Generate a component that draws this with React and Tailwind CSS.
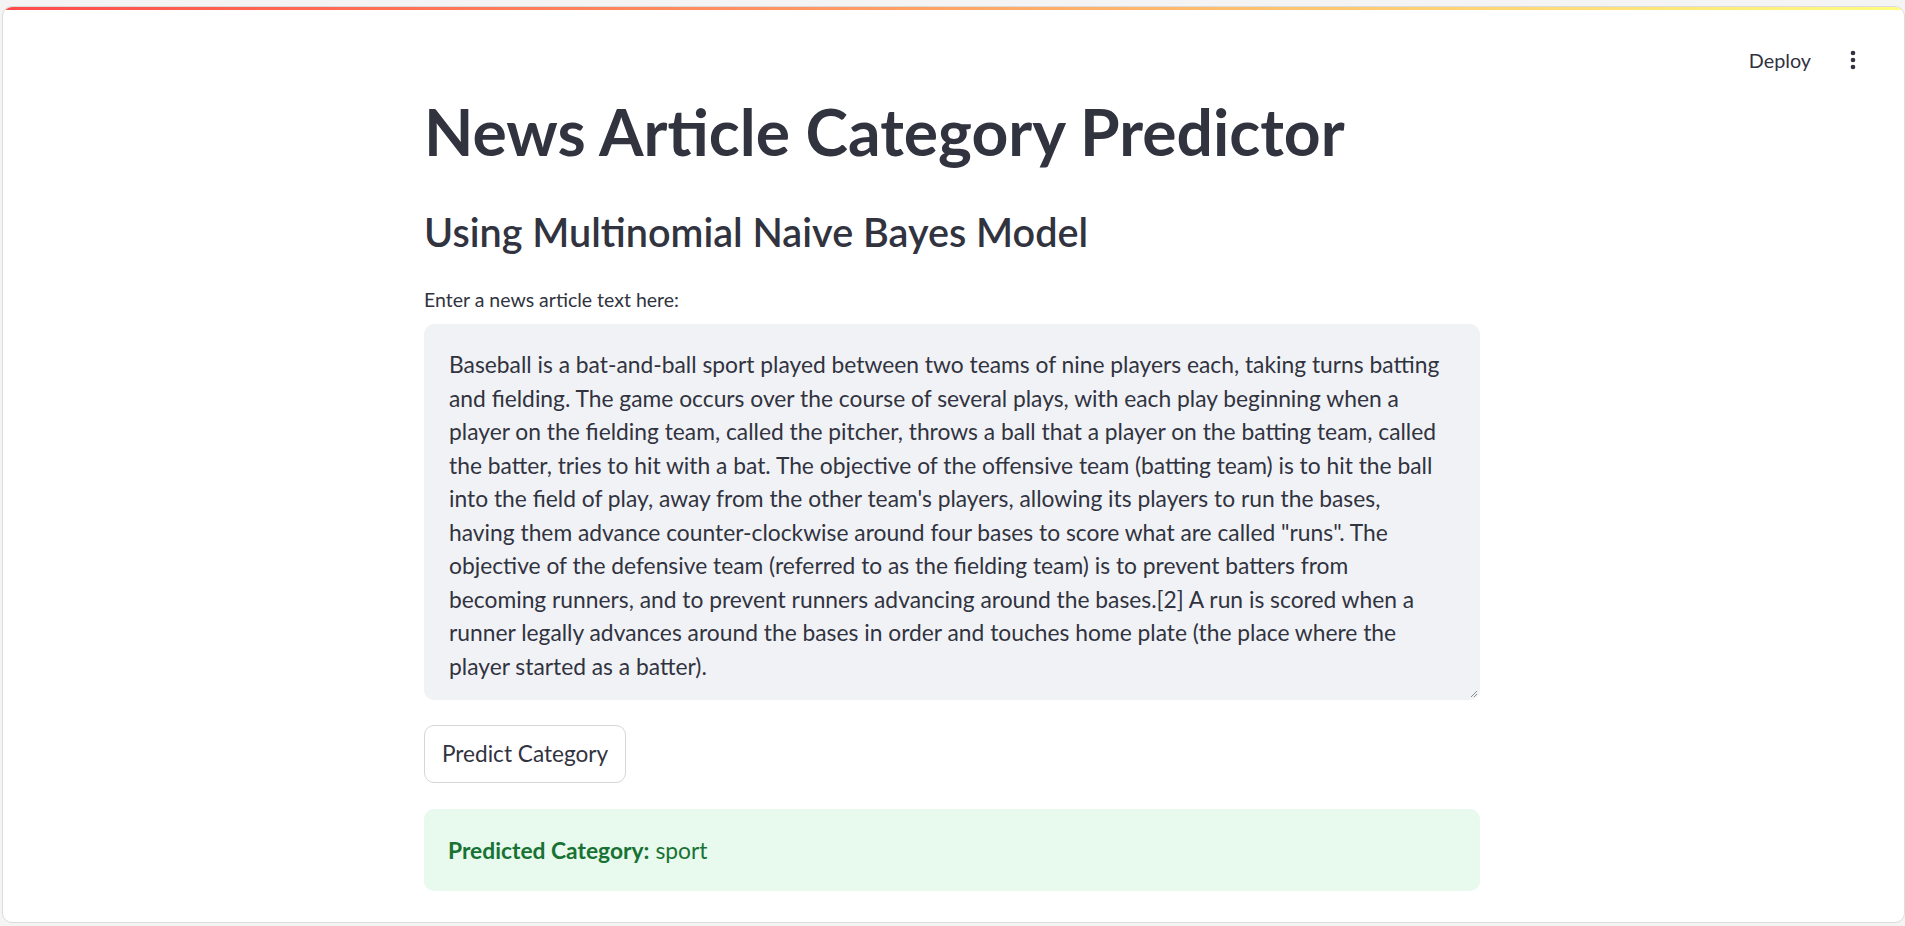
import { useState } from "react";

const ARTICLE_LINES = [
  "Baseball is a bat-and-ball sport played between two teams of nine players each, taking turns batting",
  "and fielding. The game occurs over the course of several plays, with each play beginning when a",
  "player on the fielding team, called the pitcher, throws a ball that a player on the batting team, called",
  "the batter, tries to hit with a bat. The objective of the offensive team (batting team) is to hit the ball",
  "into the field of play, away from the other team's players, allowing its players to run the bases,",
  "having them advance counter-clockwise around four bases to score what are called \"runs\". The",
  "objective of the defensive team (referred to as the fielding team) is to prevent batters from",
  "becoming runners, and to prevent runners advancing around the bases.[2] A run is scored when a",
  "runner legally advances around the bases in order and touches home plate (the place where the",
  "player started as a batter).",
];

function MenuDots() {
  return (
    <svg width="8" height="20" viewBox="0 0 8 20" className="text-[#31333f]">
      <circle cx="4" cy="3" r="2.3" fill="currentColor" />
      <circle cx="4" cy="10" r="2.3" fill="currentColor" />
      <circle cx="4" cy="17" r="2.3" fill="currentColor" />
    </svg>
  );
}

function ResizeGrip() {
  return (
    <svg width="9" height="9" viewBox="0 0 9 9" className="absolute bottom-[2px] right-[2px]">
      <path d="M8 2 L2 8 M8 5 L5 8" stroke="#8a8a8a" strokeWidth="1" />
    </svg>
  );
}

export default function App() {
  const [category] = useState("sport");

  return (
    <div className="h-[926px] w-full overflow-hidden bg-[#f4f4f4] pl-[2px] pt-[6px] font-['Lato',sans-serif] text-[#31333f]">
      <div className="flex h-[917px] flex-col overflow-hidden rounded-[10px] border border-[#dcdcdc] bg-white">
        <div className="h-[3px] shrink-0 bg-[linear-gradient(90deg,#ff4b4b,#fffd80)]" />

        <header className="flex h-[89px] shrink-0 items-start justify-end gap-[38px] pr-[47px] pt-[36px]">
          <button className="text-[19.8px] leading-[28px] text-[#31333f]">Deploy</button>
          <div className="flex h-[28px] items-center">
            <MenuDots />
          </div>
        </header>

        <main className="ml-[421px] flex w-[1056px] flex-col">
          <h1 className="text-[64.2px] font-bold leading-[66px]">News Article Category Predictor</h1>

          <h2 className="mt-[40px] text-[39.6px] font-semibold leading-[54px]">Using Multinomial Naive Bayes Model</h2>

          <label className="mt-[27px] text-[19.5px] leading-[28px]">Enter a news article text here:</label>

          <div className="relative mt-[10px] h-[376px] rounded-[10px] bg-[#f0f2f6] px-[25px] pt-[24px] text-[22.8px] leading-[33.5px]">
            {ARTICLE_LINES.map((line, i) => (
              <div key={i} className="whitespace-nowrap">
                {line}
              </div>
            ))}
            <ResizeGrip />
          </div>

          <div className="mt-[25px]">
            <button className="h-[58px] rounded-[10px] border border-[#d5d6d9] bg-white px-[17px] text-[22.6px] text-[#31333f]">
              Predict Category
            </button>
          </div>

          <div className="mt-[26px] flex h-[82px] items-center rounded-[10px] bg-[#e8f9ee] px-[24px] text-[22.8px] text-[#177233]">
            <span className="font-bold">Predicted Category:</span>
            <span className="ml-[6px]">{category}</span>
          </div>
        </main>
      </div>
    </div>
  );
}
